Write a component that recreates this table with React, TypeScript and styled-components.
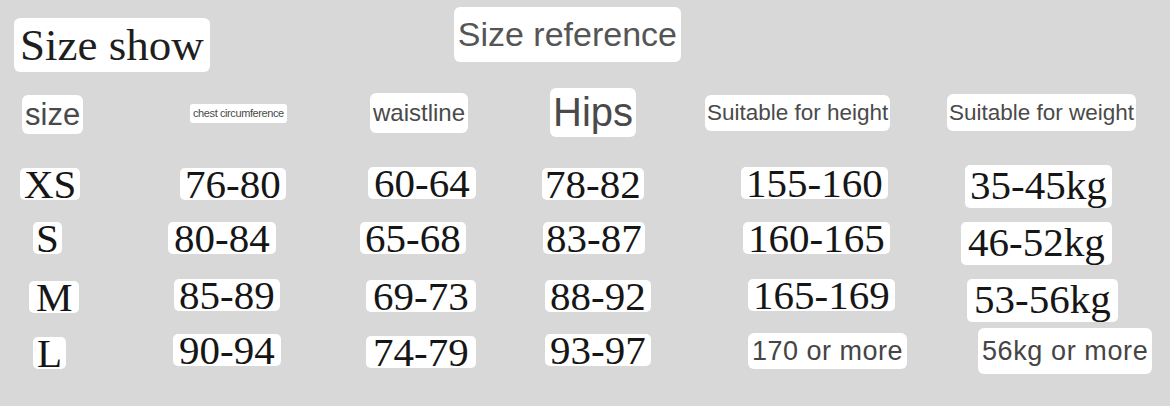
import React from 'react';
import styled, { createGlobalStyle } from 'styled-components';

const Global = createGlobalStyle`
  html, body { margin: 0; padding: 0; background: #d8d8d8; }
  body { width: 1170px; height: 406px; overflow: hidden; }
`;

const Page = styled.main`
  width: 1170px;
  height: 406px;
  box-sizing: border-box;
  padding: 7px 0 0 14px;
  background: #d8d8d8;
  display: flex;
  flex-direction: column;
`;

const TitleRow = styled.header`
  display: flex;
  align-items: flex-start;
  height: 81px;
`;

const Chip = styled.span<{ $dx?: number; $dy?: number }>`
  display: inline-block;
  justify-self: start;
  background: #ffffff;
  border-radius: 6px;
  white-space: nowrap;
  box-sizing: border-box;
  margin-left: ${(p) => p.$dx ?? 0}px;
  margin-top: ${(p) => p.$dy ?? 0}px;
`;

const SerifTitle = styled(Chip)`
  font-family: 'Liberation Serif', 'Times New Roman', serif;
  font-size: 45px;
  line-height: 54px;
  height: 54px;
  padding: 0 6px;
  color: #1e1e1e;
`;

const SansTitle = styled(Chip)`
  font-family: 'Liberation Sans', Arial, sans-serif;
  font-size: 34px;
  line-height: 55px;
  height: 55px;
  padding: 0 4px;
  color: #555555;
`;

const Grid = styled.div<{ $h: number; $align: string }>`
  display: grid;
  grid-template-columns: 146px 195px 180px 165px 240px 216px;
  height: ${(p) => p.$h}px;
  align-items: ${(p) => p.$align};
`;

const Heading = styled(Chip)<{ $size: number; $h: number; $pad?: number; $ls?: number }>`
  font-family: 'Liberation Sans', Arial, sans-serif;
  font-size: ${(p) => p.$size}px;
  line-height: ${(p) => p.$h}px;
  height: ${(p) => p.$h}px;
  padding: 0 ${(p) => p.$pad ?? 3}px;
  letter-spacing: ${(p) => p.$ls ?? 0}px;
  color: #4a4a4a;
`;

const TinyHeading = styled(Chip)`
  font-family: 'Liberation Sans', Arial, sans-serif;
  font-size: 11px;
  line-height: 19px;
  height: 19px;
  padding: 0 3px;
  letter-spacing: -0.4px;
  color: #4a4a4a;
  border-radius: 3px;
`;

const Body = styled.section`
  display: flex;
  flex-direction: column;
  padding-top: 31px;
`;

const Value = styled(Chip)<{ $kg?: boolean; $pad?: number }>`
  font-family: 'Liberation Serif', 'Times New Roman', serif;
  font-size: 41px;
  line-height: 32px;
  height: ${(p) => (p.$kg ? 43 : 32)}px;
  padding: ${(p) => (p.$kg ? 4 : 0)}px ${(p) => p.$pad ?? 5}px 0;
  color: #161616;
  border-radius: 5px;
`;

const Note = styled(Chip)<{ $h: number; $pad: number; $ls: number }>`
  font-family: 'Liberation Sans', Arial, sans-serif;
  font-size: 27px;
  line-height: ${(p) => p.$h}px;
  height: ${(p) => p.$h}px;
  padding: 0 ${(p) => p.$pad}px;
  letter-spacing: ${(p) => p.$ls}px;
  color: #454545;
`;

type Cell = { t: string; dx: number; dy?: number; pad?: number };

const rows: { h: number; cells: Cell[] }[] = [
  {
    h: 54,
    cells: [
      { t: 'XS', dx: 6, pad: 4 },
      { t: '76-80', dx: 20 },
      { t: '60-64', dx: 13, dy: -1, pad: 6 },
      { t: '78-82', dx: 7, pad: 3 },
      { t: '155-160', dx: 41, dy: -1 },
      { t: '35-45kg', dx: 25, dy: -3 },
    ],
  },
  {
    h: 58,
    cells: [
      { t: 'S', dx: 19, pad: 3 },
      { t: '80-84', dx: 8, pad: 6 },
      { t: '65-68', dx: 5, pad: 5 },
      { t: '83-87', dx: 8, pad: 3 },
      { t: '160-165', dx: 43 },
      { t: '46-52kg', dx: 21, pad: 7 },
    ],
  },
  {
    h: 55,
    cells: [
      { t: 'M', dx: 15, dy: 1, pad: 7 },
      { t: '85-89', dx: 14, dy: -1, pad: 5 },
      { t: '69-73', dx: 11, pad: 7 },
      { t: '88-92', dx: 10, pad: 5 },
      { t: '165-169', dx: 48, dy: -1 },
      { t: '53-56kg', dx: 27, dy: -1, pad: 7 },
    ],
  },
];

export default function App() {
  return (
    <>
      <Global />
      <Page>
        <TitleRow>
          <SerifTitle $dy={11}>Size show</SerifTitle>
          <SansTitle $dx={244}>Size reference</SansTitle>
        </TitleRow>

        <Grid $h={49} $align="center">
          <Heading $dx={8} $size={31} $h={39} $pad={3} $dy={4}>size</Heading>
          <TinyHeading $dx={30} $dy={1}>chest circumference</TinyHeading>
          <Heading $dx={15} $size={24} $h={40} $pad={3}>waistline</Heading>
          <Heading $dx={15} $size={40} $h={49} $pad={3}>Hips</Heading>
          <Heading $dx={5} $size={22.5} $h={36} $pad={2}>Suitable for height</Heading>
          <Heading $dx={7} $size={22.5} $h={37} $pad={2}>Suitable for weight</Heading>
        </Grid>

        <Body>
          {rows.map((r, i) => (
            <Grid key={i} $h={r.h} $align="start">
              {r.cells.map((c, j) => (
                <Value key={j} $dx={c.dx} $dy={c.dy} $pad={c.pad} $kg={c.t.endsWith('kg')}>
                  {c.t}
                </Value>
              ))}
            </Grid>
          ))}
          <Grid $h={60} $align="start">
            <Value $dx={19} $dy={2} $pad={4}>L</Value>
            <Value $dx={13} $dy={-1} $pad={6}>90-94</Value>
            <Value $dx={11} $dy={1} $pad={7}>74-79</Value>
            <Value $dx={10} $dy={-1} $pad={5}>93-97</Value>
            <Note $dx={48} $dy={-2} $h={36} $pad={4} $ls={0.5}>170 or more</Note>
            <Note $dx={38} $dy={-7} $h={46} $pad={4} $ls={0.6}>56kg or more</Note>
          </Grid>
        </Body>
      </Page>
    </>
  );
}
